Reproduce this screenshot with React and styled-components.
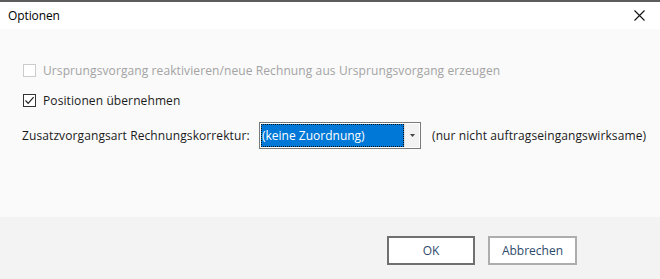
import React from "react";
import styled, { createGlobalStyle } from "styled-components";

const Global = createGlobalStyle`
  html, body { margin: 0; padding: 0; background: #fafafa; }
  body { font-family: "Open Sans", "Noto Sans", sans-serif; font-size: 12px; color: #1a1a1a; }
  * { box-sizing: border-box; }
`;

const Window = styled.div`
  width: 660px;
  height: 279px;
  display: flex;
  flex-direction: column;
  background: #fafafa;
  border-top: 2px solid #5c5c5c;
  overflow: hidden;
`;

const TitleBar = styled.div`
  height: 27px;
  flex: none;
  background: #ffffff;
  display: flex;
  align-items: center;
  justify-content: space-between;
  padding: 0 8px 0 8px;
`;

const Title = styled.span`
  font-size: 12px;
  color: #000;
  letter-spacing: -0.1px;
`;

const CloseButton = styled.button`
  width: 20px;
  height: 20px;
  border: none;
  background: transparent;
  padding: 0;
  display: flex;
  align-items: center;
  justify-content: center;
  margin-right: 3px;
`;

const Content = styled.div`
  flex: 1;
  display: flex;
  flex-direction: column;
  padding: 35px 0 0 23px;
  background: #fafafa;
  letter-spacing: 0.1px;
  white-space: nowrap;
`;

const CheckRow = styled.label`
  display: flex;
  align-items: center;
  gap: 7px;
  height: 13px;
  margin-bottom: ${(p) => p.$mb || 0}px;
  color: ${(p) => (p.$disabled ? "#a3a3a3" : "#1a1a1a")};
`;

const Box = styled.span`
  width: 13px;
  height: 13px;
  flex: none;
  background: #fff;
  border: 1px solid ${(p) => (p.$disabled ? "#cccccc" : "#333333")};
  display: flex;
  align-items: center;
  justify-content: center;
`;

const FieldRow = styled.div`
  display: flex;
  align-items: center;
  margin-top: 14px;
  margin-left: -1px;
  height: 28px;
`;

const FieldLabel = styled.span`
  width: 237px;
  flex: none;
`;

const Select = styled.div`
  width: 162px;
  height: 27px;
  flex: none;
  display: flex;
  border: 1px solid #7a7a7a;
  background: #fff;
  padding: 1px;
`;

const SelectValue = styled.div`
  flex: 1;
  background: #0078d7;
  color: #fff;
  display: flex;
  align-items: center;
  padding-left: 1px;
  font-size: 12px;
  letter-spacing: 0;
  outline: 1px dotted #111;
  outline-offset: -1px;
`;

const SelectArrow = styled.div`
  width: 15px;
  flex: none;
  background: #f2f2f2;
  display: flex;
  align-items: center;
  justify-content: center;
  border-left: 1px solid #e0e0e0;
`;

const Hint = styled.span`
  margin-left: 11px;
  white-space: nowrap;
  flex: none;
`;

const Footer = styled.div`
  height: 62px;
  flex: none;
  background: #f3f3f3;
  display: flex;
  justify-content: flex-end;
  align-items: flex-start;
  padding: 19px 83px 0 0;
  gap: 13px;
`;

const Button = styled.button`
  width: ${(p) => p.$w}px;
  height: 29px;
  background: #fff;
  border: 2px solid ${(p) => (p.$primary ? "#707070" : "#adadad")};
  font-family: "Open Sans", "Noto Sans", sans-serif;
  font-size: 12px;
  color: #2e4a6a;
  padding: 0;
`;

export default function App() {
  return (
    <>
      <Global />
      <Window>
        <TitleBar>
          <Title>Optionen</Title>
          <CloseButton aria-label="Schließen">
            <svg width="11" height="11" viewBox="0 0 11 11">
              <path d="M0.5 0.5 L10.5 10.5 M10.5 0.5 L0.5 10.5" stroke="#111" strokeWidth="1.1" />
            </svg>
          </CloseButton>
        </TitleBar>
        <Content>
          <CheckRow $disabled $mb={17}>
            <Box $disabled />
            <span>Ursprungsvorgang reaktivieren/neue Rechnung aus Ursprungsvorgang erzeugen</span>
          </CheckRow>
          <CheckRow>
            <Box>
              <svg width="11" height="11" viewBox="0 0 11 11">
                <path d="M1.5 5.5 L4.2 8.3 L9.6 2.2" stroke="#222" strokeWidth="1.2" fill="none" />
              </svg>
            </Box>
            <span>Positionen übernehmen</span>
          </CheckRow>
          <FieldRow>
            <FieldLabel>Zusatzvorgangsart Rechnungskorrektur:</FieldLabel>
            <Select>
              <SelectValue>(keine Zuordnung)</SelectValue>
              <SelectArrow>
                <svg width="5" height="3" viewBox="0 0 5 3">
                  <path d="M0 0 H5 L2.5 3 Z" fill="#444" />
                </svg>
              </SelectArrow>
            </Select>
            <Hint>(nur nicht auftragseingangswirksame)</Hint>
          </FieldRow>
        </Content>
        <Footer>
          <Button $primary $w={88}>OK</Button>
          <Button $w={89}>Abbrechen</Button>
        </Footer>
      </Window>
    </>
  );
}
